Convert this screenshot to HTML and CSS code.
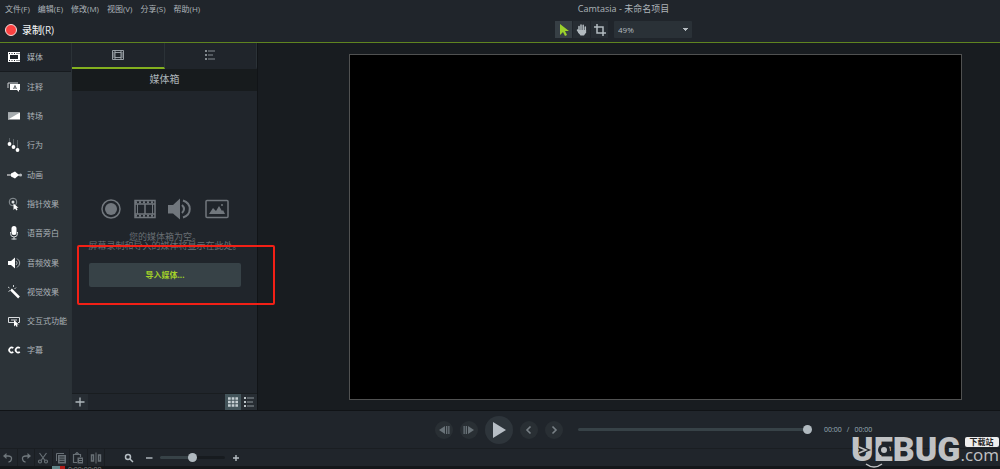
FILE: index.html
```html
<!DOCTYPE html>
<html lang="zh-CN">
<head>
<meta charset="utf-8">
<title>Camtasia - 未命名项目</title>
<link rel="stylesheet" href="styles.css">
</head>
<body>
<div class="app">
  <header class="topbar">
    <nav class="menu">
      <button>文件(F)</button><button>编辑(E)</button><button>修改(M)</button><button>视图(V)</button><button>分享(S)</button><button>帮助(H)</button>
    </nav>
    <h1 class="window-title">Camtasia - 未命名项目</h1>
    <button class="record"><span class="record-dot"></span>录制(R)</button>
    <div class="canvas-tools">
      <div class="tool-group">
        <button class="tool active" aria-label="选择"><svg width="12" height="14" viewBox="0 0 12 14"><path d="M2 1v11l3-3 2 4 2-1-2-4h4z" fill="#9bd02c"/></svg></button>
        <button class="tool" aria-label="平移"><svg width="12" height="12" viewBox="0 0 12 12"><path d="M3 7V2.500M5 6V1M7.200 6V1.300M9.300 7V3M1.500 6l2 3" stroke="#b3bbc0" stroke-width="1.500" stroke-linecap="round"/><path d="M2.300 6h7.800v2.500L8 11.500H4.500L2 8z" fill="#b3bbc0"/></svg></button>
        <button class="tool" aria-label="裁剪"><svg width="12" height="12" viewBox="0 0 12 12" fill="none" stroke="#b3bbc0" stroke-width="1.500"><path d="M3 0v9h9M0 3h9v9"/></svg></button>
      </div>
      <select class="zoom-select" aria-label="缩放"><option>49%</option></select>
    </div>
  </header>

  <main class="workspace">
    <nav class="sidebar">
      <button class="side-item current"><svg width="14" height="12" viewBox="0 0 14 12"><path fill="#fff" fill-rule="evenodd" d="M1 1h12v10H1zM2 2v1h1V2zm2.500 0v1h1V2zM7 2v1h1V2zm2.500 0v1h1V2zM11.500 2v1h1V2zM3 4v4h8V4zM2 9v1h1V9zm2.500 0v1h1V9zM7 9v1h1V9zm2.500 0v1h1V9zm2 0v1h1V9z"/></svg>媒体</button>
      <button class="side-item"><svg width="14" height="12" viewBox="0 0 14 12"><path d="M1 7V2h10" fill="none" stroke="#ccd0d2"/><path d="M3 3h10v6h-1v2l-2-2H3z" fill="#fff"/><path d="M6.500 8L8 4.500 9.500 8M7 7h2" stroke="#444b50" stroke-width=".8" fill="none"/></svg>注释</button>
      <button class="side-item"><svg width="14" height="12" viewBox="0 0 14 12"><path d="M1 2.500h12v7H1z" fill="#fff"/><path d="M1 2.500h12l-12 7z" fill="#a6acaf"/></svg>转场</button>
      <button class="side-item"><svg width="14" height="14" viewBox="0 0 14 14"><path d="M2.500 0v6M6.500 1v7M10.500 2v9" stroke="#596166"/><g fill="#fff"><circle cx="2.500" cy="6" r="1.900"/><circle cx="6.500" cy="9" r="1.900"/><circle cx="10.500" cy="12" r="1.900"/></g></svg>行为</button>
      <button class="side-item"><svg width="16" height="12" viewBox="0 0 16 12"><path d="M0 6h14" stroke="#fff"/><path d="M4 4.500L8 2.500 12 6 8 9.500 4 7.500z" fill="#fff"/><circle cx="13.500" cy="6" r="1.600" fill="#b5babd"/></svg>动画</button>
      <button class="side-item"><svg width="14" height="14" viewBox="0 0 14 14"><circle cx="6" cy="5" r="3.800" fill="none" stroke="#8c9498"/><circle cx="6" cy="5" r="1.500" fill="#d9dcde"/><path d="M6.500 6.500v6.500l1.500-1.500 1.500 2 1-.7-1-2h2z" fill="#fff"/></svg>指针效果</button>
      <button class="side-item"><svg width="14" height="14" viewBox="0 0 14 14"><rect x="4.500" y="0" width="5" height="9" rx="2.500" fill="#fff"/><path d="M3.500 6v1.500a3.500 3.500 0 0 0 7 0V6M7 11v2.500M4.500 13h5" fill="none" stroke="#d7dadc"/></svg>语音旁白</button>
      <button class="side-item"><svg width="14" height="12" viewBox="0 0 14 12"><path d="M1 4h3l4-3.500v11L4 8H1z" fill="#fff"/><path d="M9 4q2.500 2 0 4M10 1.500q5.500 4.500 0 9" fill="none" stroke="#a9afb3"/></svg>音频效果</button>
      <button class="side-item"><svg width="14" height="14" viewBox="0 0 14 14"><path d="M4 4.500l8 8" stroke="#fff" stroke-width="2.500"/><path d="M6.500 0v2M1 2l1.500 1M1.500 6.500L3 5.500M9 2.500L7.500 4" stroke="#cbd0d2"/></svg>视觉效果</button>
      <button class="side-item"><svg width="14" height="12" viewBox="0 0 14 12"><path d="M7 7.500H1.500v-5h11v5H11M4 5h6" fill="none" stroke="#d9dcde"/><path d="M7 5v6.500L8.500 10l1.200 2 1-.7L9.800 9.500h2z" fill="#fff"/></svg>交互式功能</button>
      <button class="side-item"><svg width="14" height="12" viewBox="0 0 14 12" fill="none" stroke="#fff" stroke-width="1.700"><path d="M6.300 4.100a2.500 2.500 0 1 0 0 3.800M12.800 4.100a2.500 2.500 0 1 0 0 3.800"/></svg>字幕</button>
    </nav>

    <section class="bin">
      <div class="bin-tabs">
        <button class="bin-tab selected" aria-label="媒体箱"><svg width="12" height="10" viewBox="0 0 12 10" fill="none" stroke="#a4acb1"><path d="M.5.5h11v9H.5zM3 .5v9M9 .5v9M3 2.500h6M3 7.500h6M1 3h2M1 5h2M1 7h2M9 3h2M9 5h2M9 7h2" stroke-width=".9"/></svg></button>
        <button class="bin-tab" aria-label="库"><svg width="12" height="12" viewBox="0 0 12 12"><path d="M1 2h2M1 6h2M1 10h2" stroke="#a4acb1" stroke-width="1.600"/><path d="M4 2h7M4 6h5M4 10h7" stroke="#848c91"/></svg></button>
      </div>
      <h2 class="bin-title">媒体箱</h2>
      <div class="bin-body">
        <div class="media-icons">
          <svg width="20" height="20" viewBox="0 0 20 20"><circle cx="10" cy="10" r="9" fill="none" stroke="#71777d" stroke-width="1.500"/><circle cx="10" cy="10" r="6" fill="#71777d"/></svg>
          <svg width="22" height="20" viewBox="0 0 22 20" fill="none" stroke="#71777d"><path d="M1 1.500h20v17H1zM1 5h20M1 15h20M11 5v10" stroke-width="1.500"/><path d="M1 3.200h20M1 16.800h20" stroke-width="2" stroke-dasharray="2 2"/><path d="M3.500 5v10M18.500 5v10"/></svg>
          <svg width="24" height="22" viewBox="0 0 24 22"><path d="M0 7h5l7-6.500v21L5 15.500H0z" fill="#71777d"/><path d="M14 7q4 4 0 8M15 2.500c9 3 9 14 0 17" fill="none" stroke="#71777d" stroke-width="2"/></svg>
          <svg width="24" height="20" viewBox="0 0 24 20"><rect x="1" y="1.500" width="22" height="17" rx="1" fill="none" stroke="#71777d" stroke-width="1.500"/><path d="M4 15l4-6 3 3 3-5 3 5 1-1 2 4z" fill="#71777d"/><circle cx="17" cy="6" r="1" fill="#71777d"/></svg>
        </div>
        <p class="empty-text">您的媒体箱为空。<br>屏幕录制和导入的媒体将显示在此处。</p>
        <button class="import">导入媒体...</button>
        <div class="highlight"></div>
      </div>
      <footer class="bin-footer">
        <button class="foot-button" aria-label="添加"><svg width="10" height="10" viewBox="0 0 10 10"><path d="M5 .5v9M.5 5h9" stroke="#b0b8bd" stroke-width="1.300"/></svg></button>
        <div class="view-buttons">
          <button class="foot-button grid-view" aria-label="网格"><svg width="10" height="10" viewBox="0 0 10 10"><path d="M0 1.500h10M0 5h10M0 8.500h10" stroke="#c5ced2" stroke-width="2.600" stroke-dasharray="2.700 1"/></svg></button>
          <button class="foot-button" aria-label="列表"><svg width="12" height="12" viewBox="0 0 12 12"><path d="M1 2h2M1 6h2M1 10h2" stroke="#bdc5c9" stroke-width="1.800"/><path d="M4 2h7M4 6h6M4 10h7" stroke="#8b9499"/></svg></button>
        </div>
      </footer>
    </section>

    <section class="stage"><div class="canvas"></div></section>
  </main>

  <section class="playback">
    <div class="transport">
      <button class="round" aria-label="上一帧"><svg width="12" height="10" viewBox="0 0 12 10" fill="#697278"><path d="M7 1v8L1 5zM8 1h1.300v8H8zM10.200 1h1.300v8h-1.300z"/></svg></button>
      <button class="round" aria-label="下一帧"><svg width="12" height="10" viewBox="0 0 12 10" fill="#697278"><path d="M5 1v8l6-4zM.5 1h1.300v8H.5zM2.700 1H4v8H2.700z"/></svg></button>
      <button class="round play" aria-label="播放"><svg width="16" height="16" viewBox="0 0 16 16"><path d="M2 0v16l13-8z" fill="#b8bfc6"/></svg></button>
      <button class="round" aria-label="上一个"><svg width="8" height="10" viewBox="0 0 8 10"><path d="M5.500 1.500L2 5l3.500 3.500" fill="none" stroke="#798187" stroke-width="1.600"/></svg></button>
      <button class="round" aria-label="下一个"><svg width="8" height="10" viewBox="0 0 8 10"><path d="M2.500 1.500L6 5 2.500 8.500" fill="none" stroke="#798187" stroke-width="1.600"/></svg></button>
    </div>
    <input class="slider seek" type="range" min="0" max="100" value="100" aria-label="播放位置">
    <div class="time"><span>00:00</span><span>/</span><span>00:00</span></div>
  </section>

  <section class="timeline-tools">
    <div class="edit-tools">
      <button aria-label="撤消"><svg width="12" height="12" viewBox="0 0 12 12"><path d="M3 4h3q4 0 3.500 3T6.500 10" fill="none" stroke="#6f777c" stroke-width="1.300"/><path d="M1 4l3.500-3v6z" fill="#6f777c"/></svg></button>
      <button aria-label="恢复"><svg width="12" height="12" viewBox="0 0 12 12"><path d="M9 4H6q-4 0-3.500 3t3 3" fill="none" stroke="#6f777c" stroke-width="1.300"/><path d="M11 4L7.500 1v6z" fill="#6f777c"/></svg></button>
      <button aria-label="剪切"><svg width="12" height="12" viewBox="0 0 12 12" fill="none" stroke="#687076" stroke-width="1.200"><path d="M2.500 1l5.500 7.500M9.500 1L4 8.500"/><circle cx="3" cy="9.500" r="1.500"/><circle cx="9" cy="9.500" r="1.500"/></svg></button>
      <button aria-label="复制"><svg width="12" height="12" viewBox="0 0 12 12"><path d="M1.500 9V1.500H9" fill="none" stroke="#687076"/><path d="M3 3h8v8.500H3z" fill="#687076"/><path d="M4.500 5h5M4.500 7.200h5M4.500 9.400h5" stroke="#252a2f"/></svg></button>
      <button aria-label="粘贴"><svg width="12" height="12" viewBox="0 0 12 12"><path d="M5 10.500H1.500v-8h7V5M3 2.500L5 .5l2 2" fill="none" stroke="#687076" stroke-width="1.200"/><path d="M5.500 5.500H11v6H5.500z" fill="#687076"/><path d="M7 7.500h3M7 9.500h3" stroke="#252a2f"/></svg></button>
      <button aria-label="分割"><svg width="12" height="12" viewBox="0 0 12 12" fill="none" stroke="#687076"><path d="M6 .5v11"/><path d="M1.500 3h2v6h-2zM8.500 3h2v6h-2z" stroke-width="1.400"/></svg></button>
    </div>
    <div class="zoom-tools">
      <svg width="10" height="10" viewBox="0 0 10 10" fill="none" stroke="#b6bec3" stroke-width="1.500"><circle cx="4" cy="4" r="2.500"/><path d="M6 6l3 3"/></svg>
      <button class="step" aria-label="缩小"><svg width="8" height="8" viewBox="0 0 8 8"><path d="M1 4h6.500" stroke="#b6bec3" stroke-width="1.400"/></svg></button>
      <input class="slider zoom" type="range" min="0" max="100" value="50" aria-label="时间轴缩放">
      <button class="step" aria-label="放大"><svg width="8" height="8" viewBox="0 0 8 8"><path d="M1 4h6M4 1v6" stroke="#b6bec3" stroke-width="1.400"/></svg></button>
    </div>
  </section>
  <section class="timeline"><i class="in-mark"></i><i class="out-mark"></i><span>0:00:00;00</span></section>

  <aside class="watermark">
    <span class="brand">UEBUG</span>
    <svg class="face" width="54" height="34" viewBox="0 0 54 34" fill="none"><circle cx="33" cy="12" r="6" fill="#20252b"/><path d="M8 9l7 3-7 3" stroke="#20252b" stroke-width="4"/><path d="M8 9l7 3-7 3" stroke="#c0c2c4" stroke-width="1.500"/><circle cx="33" cy="12" r="3" fill="#c0c2c4"/><path d="M15 26q8 6 16 0" stroke="#c0c2c4" stroke-width="1.500"/></svg>
    <span class="brand-end"><span class="badge">下载站</span><span class="domain">.com</span></span>
  </aside>
</div>
</body>
</html>
```

FILE: styles.css
```css
* { box-sizing: border-box; }
body {
  margin: 0;
  background: #20252b;
  color: #adb4b9;
  font: 8px/12px "Open Sans", "Noto Sans CJK SC", sans-serif;
}
button { border: 0; padding: 0; background: none; color: inherit; font: inherit; }
svg { display: block; flex: none; }
h1, h2, p { margin: 0; font-weight: 400; }

.app {
  position: relative;
  min-height: 100vh;
  display: grid;
  grid-template-rows: auto 1fr 39px 17px 3px;
  overflow: hidden;
}

.topbar {
  display: grid;
  grid-template-columns: 247px 1fr;
  grid-template-rows: 17px 25px;
  align-items: center;
  border-bottom: 1px solid #5f8420;
}
.menu { display: flex; gap: 8px; padding-left: 5px; white-space: nowrap; }
.window-title { font-size: 9px; text-align: center; }
.record {
  display: flex;
  align-items: center;
  gap: 5px;
  padding-left: 5px;
  color: #eceeef;
  font-size: 10px;
  font-weight: 500;
}
.record-dot { width: 12px; height: 12px; border: 1px solid #f3dfdf; border-radius: 50%; background: #fc4141; }
.canvas-tools { display: flex; justify-content: center; gap: 6px; }
.tool-group { display: flex; gap: 1px; }
.tool { width: 17px; height: 17px; display: grid; place-items: center; background: #272d33; }
.tool.active { background: #373f45; }
.zoom-select {
  appearance: none;
  width: 78px;
  height: 17px;
  padding: 0 4px;
  border: 0;
  border-radius: 1px;
  color: #b5bcc1;
  font: inherit;
  background: #2a3137 conic-gradient(from 315deg at 50% 100%, #b5bcc1 90deg, transparent 0) right 4px center / 6px 3px no-repeat;
}

.workspace { display: grid; grid-template-columns: 71px 187px 1fr; min-height: 0; }
.sidebar {
  display: grid;
  grid-template-rows: repeat(11, 1fr);
  padding-bottom: 45px;
  background: #2c3338;
}
.side-item { display: grid; grid-template-columns: 20px 1fr; align-items: center; padding-left: 7px; text-align: left; white-space: nowrap; }
.side-item.current { background: #20252b; border-bottom: 1px solid #171b1f; }

.bin {
  display: grid;
  grid-template-rows: 26px 22px 1fr 17px;
  border-left: 1px solid #2b3237;
  border-right: 1px solid #111417;
}
.bin-tabs { display: grid; grid-template-columns: 1fr 1fr; }
.bin-tab { display: grid; place-items: center; border-bottom: 2px solid transparent; border-right: 1px solid #2b3237; }
.bin-tab.selected { border-bottom-color: #83b01f; }
.bin-title { background: #171b1d; font-size: 10px; line-height: 21px; text-align: center; }
.bin-body { position: relative; padding: 106px 16px 0 17px; }
.media-icons { display: flex; align-items: center; justify-content: space-between; padding: 0 12px; height: 24px; }
.empty-text { margin: 11px -8px 13px; color: #686e73; font-size: 9px; line-height: 9px; text-align: center; white-space: nowrap; }
.import {
  width: 100%;
  height: 24px;
  border-radius: 2px;
  background: #374247;
  color: #a2d02a;
  font-weight: 700;
}
.highlight {
  position: absolute;
  left: 5px;
  top: 154px;
  width: 198px;
  height: 60px;
  border: 2px solid #f22016;
  border-radius: 2px;
  z-index: 2;
  pointer-events: none;
}
.bin-footer { display: flex; justify-content: space-between; border-top: 1px solid #191d20; }
.view-buttons { display: flex; }
.foot-button { width: 16px; display: grid; place-items: center; background: #272d33; }
.grid-view { background: #43545a; }

.stage { display: grid; padding: 11px 38px 10px 91px; background: #181c20; }
.canvas { background: #000; border: 1px solid #505151; }

.playback {
  display: grid;
  grid-template-columns: 1fr 234px 188px;
  align-items: center;
  border-top: 1px solid #101316;
  border-bottom: 1px solid #1a1e22;
}
.transport { display: flex; align-items: center; justify-content: flex-end; gap: 7px; padding-right: 15px; }
.round { width: 18px; height: 18px; border-radius: 50%; display: grid; place-items: center; background: #292f34; }
.play { width: 28px; height: 28px; background: #2e353b; }
.time { display: flex; gap: 5px; padding-left: 12px; font-size: 7px; color: #99adb7; }

.slider { appearance: none; width: 100%; height: 10px; margin: 0; background: none; }
.slider::-webkit-slider-runnable-track { height: 3px; border-radius: 2px; background: #374247; }
.slider::-webkit-slider-thumb { appearance: none; width: 9px; height: 9px; margin-top: -3px; border-radius: 50%; background: #b0b9bf; }
.slider.zoom { width: 65px; }
.slider.zoom::-webkit-slider-runnable-track { background: linear-gradient(to right, #374247 50%, #171b1f 50%); }

.timeline-tools { display: flex; align-items: center; gap: 19px; }
.edit-tools { display: grid; grid-template-columns: repeat(6, 1fr); width: 105px; height: 17px; }
.edit-tools button { display: grid; place-items: center; border-right: 1px solid #1a1e22; }
.zoom-tools { display: flex; align-items: center; gap: 7px; }
.zoom-tools > svg { margin-right: 4px; }

.timeline { display: flex; background: #14171a; padding-left: 52px; overflow: hidden; color: #888; font-size: 7px; line-height: 8px; }
.in-mark { width: 8px; background: #608488; }
.out-mark { width: 5px; margin-right: 3px; background: #b21c18; }

.watermark {
  position: absolute;
  right: 1px;
  bottom: 6px;
  display: flex;
  align-items: flex-start;
  color: #c0c2c4;
}
.brand { font: 900 34px/25px Roboto, sans-serif; }
.face { position: absolute; left: 0; top: 1px; }
.brand-end { display: flex; flex-direction: column; }
.badge { margin-left: 5px; padding: 0 4px; border-radius: 2px; background: #eee; color: #222; font-weight: 700; line-height: 10px; }
.domain { font-size: 17px; line-height: 16px; }
```
